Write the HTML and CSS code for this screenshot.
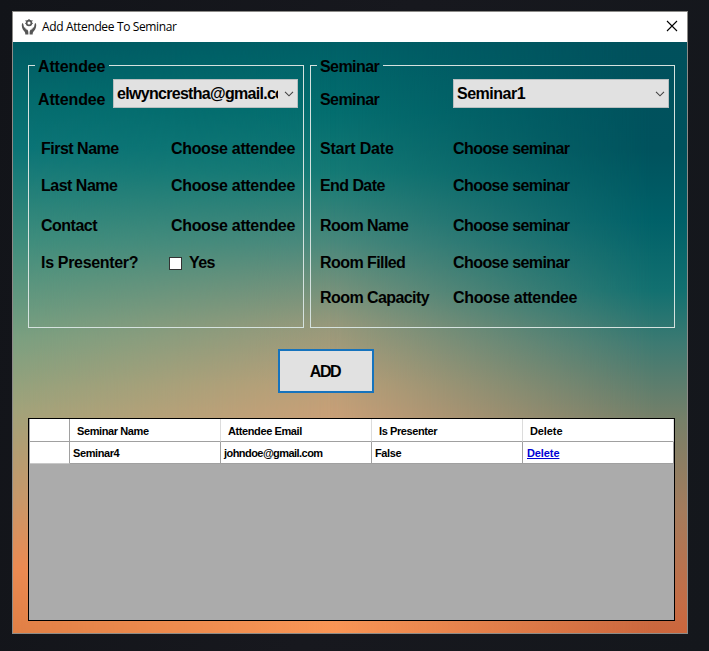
FILE: index.html
```html
<!DOCTYPE html>
<html lang="en">
<head>
<meta charset="utf-8">
<title>Add Attendee To Seminar</title>
<link rel="stylesheet" href="styles.css">
</head>
<body>
<main class="window">
  <header class="titlebar">
    <svg class="app-icon" width="16" height="16" viewBox="0 0 16 16">
      <circle cx="8" cy="4" r="2.4" fill="none" stroke="#555" stroke-width="1.7"/>
      <path d="M8 0v1M4.600 1.300l.8.8M11.400 1.300l-.8.8M4.200 4.500h1M10.800 4.500h1" stroke="#666" stroke-width="1.2"/>
      <path d="M1 4.500c.5-.6 1.200-.2 1.300.6l.6 2.700 3.500 3c.8.8 1 1.800 1 4.700H4.300c0-2-.3-2.600-1.300-3.600C1.300 10.200.3 7.300 1 4.500zM15 4.500c-.5-.6-1.200-.2-1.300.6l-.6 2.700-3.500 3c-.8.8-1 1.800-1 4.700h3.100c0-2 .3-2.600 1.300-3.600 1.700-1.700 2.700-4.600 2-7.400z" fill="#555"/>
      <path d="M3.400 8.200l2.400 2.800M12.600 8.200l-2.400 2.800" stroke="#bbb" stroke-width=".8"/>
    </svg>
    <h1 class="title">Add Attendee To Seminar</h1>
    <svg class="close" width="12" height="12" viewBox="0 0 12 12"><path d="M1 1l10 10M11 1L1 11" stroke="#000" stroke-width="1.1"/></svg>
  </header>
  <div class="client">
    <div class="groups">
      <fieldset class="group group-attendee">
        <legend>Attendee</legend>
        <div class="row row-select"><span class="label">Attendee</span>
          <div class="combo"><span class="combo-text">elwyncrestha@gmail.co</span><svg class="chevron" width="10" height="6" viewBox="0 0 10 6"><path d="M1 .8l4 4 4-4" fill="none" stroke="#444" stroke-width="1.1"/></svg></div>
        </div>
        <div class="row row-first"><span class="label">First Name</span><span class="value">Choose attendee</span></div>
        <div class="row row-second"><span class="label">Last Name</span><span class="value">Choose attendee</span></div>
        <div class="row row-third"><span class="label">Contact</span><span class="value">Choose attendee</span></div>
        <div class="row row-fourth"><span class="label presenter">Is Presenter?</span><label class="check"><i class="box"></i>Yes</label></div>
      </fieldset>
      <fieldset class="group group-seminar">
        <legend>Seminar</legend>
        <div class="row row-select"><span class="label">Seminar</span>
          <div class="combo"><span class="combo-text">Seminar1</span><svg class="chevron" width="10" height="6" viewBox="0 0 10 6"><path d="M1 .8l4 4 4-4" fill="none" stroke="#444" stroke-width="1.1"/></svg></div>
        </div>
        <div class="row row-first"><span class="label date">Start Date</span><span>Choose seminar</span></div>
        <div class="row row-second"><span class="label">End Date</span><span>Choose seminar</span></div>
        <div class="row row-third"><span class="label">Room Name</span><span>Choose seminar</span></div>
        <div class="row row-fourth"><span class="label">Room Filled</span><span>Choose seminar</span></div>
        <div class="row row-fifth"><span class="label">Room Capacity</span><span class="value">Choose attendee</span></div>
      </fieldset>
    </div>
    <button class="add" type="button">ADD</button>
    <div class="grid-view">
      <table class="grid">
        <thead><tr><th class="handle"></th><th>Seminar Name</th><th>Attendee Email</th><th>Is Presenter</th><th>Delete</th></tr></thead>
        <tbody><tr><td class="handle"></td><td>Seminar4</td><td class="email">johndoe@gmail.com</td><td>False</td><td><a href="#">Delete</a></td></tr></tbody>
      </table>
    </div>
  </div>
</main>
</body>
</html>
```
FILE: styles.css
```css
* { box-sizing: border-box; }
body {
  margin: 0;
  height: 651px;
  padding: 11px 21px 17px 12px;
  background: linear-gradient(100deg, #121419, #17181e 50%, #14171c);
  font-family: "Liberation Sans", Arial, sans-serif;
  overflow: hidden;
}
.window {
  display: flex;
  flex-direction: column;
  height: 623px;
  border: 1px solid #8c8b88;
}
.titlebar {
  display: flex;
  align-items: center;
  height: 30px;
  flex: none;
  padding: 0 9px 0 8px;
  background: #fff;
}
.title {
  flex: 1;
  margin: 0 0 0 5px;
  font: 400 12px/16px "Open Sans", "Noto Sans", sans-serif;
  letter-spacing: -0.36px;
  color: #000;
}
.close { margin-top: -2px; }

/* Backdrop: three vertical ramps blended across the width */
.client {
  position: relative;
  isolation: isolate;
  flex: 1;
  padding: 13px 12px 12px 15px;
  background: linear-gradient(#006067 0, #046e6f 12%, #157a75 22%, #4b897c 34%, #98997b 48%, #bda078 58%, #cba078 64%, #ee9860 90%, #fb9655 100%);
}
.client::before,
.client::after {
  content: "";
  position: absolute;
  inset: 0;
  z-index: -1;
}
.client::before {
  background: linear-gradient(#005a62 0, #046b6d 10%, #0b7476 18%, #3c8c7c 33%, #7a9f80 50%, #a0a27a 62%, #c6986a 77%, #ea8a52 89%, #e07f45 100%);
  -webkit-mask-image: linear-gradient(90deg, #000, transparent 48%);
  mask-image: linear-gradient(90deg, #000, transparent 48%);
}
.client::after {
  background: linear-gradient(#00505c 0, #00525d 18%, #006068 30%, #127070 42%, #3d7a72 51%, #778069 64%, #a47c5d 79%, #c56d46 95%, #cc663c 100%);
  -webkit-mask-image: linear-gradient(90deg, transparent 47%, #000 95%);
  mask-image: linear-gradient(90deg, transparent 47%, #000 95%);
}

.groups { display: flex; gap: 6px; height: 273px; }
.group {
  min-width: 0;
  margin: 0;
  padding: 0;
  border: 1px solid #d5e2df;
  font-size: 16px;
  font-weight: 700;
  letter-spacing: -0.57px;
  white-space: nowrap;
}
.group-attendee { width: 276px; }
.group-seminar { width: 365px; }
legend {
  height: 20px;
  margin-left: 6px;
  padding: 2px 4px 0 3px;
  line-height: 20px;
}
.row { display: flex; align-items: center; padding-top: 1px; }
.row-select { height: 49px; }
.row-first { height: 49px; }
.row-second { height: 25px; }
.row-third { height: 55px; }
.row-fourth { height: 19px; }
.row-fifth { height: 51px; }
.value { letter-spacing: -0.33px; }
.group-attendee .label { letter-spacing: -0.5px; }
.group-attendee legend,
.group-attendee .row-select .label { letter-spacing: -0.15px; }
.group .presenter { letter-spacing: -0.32px; }
.group .date { letter-spacing: -0.2px; }
.group-attendee .row { padding-left: 12px; }
.group-attendee .row-select { padding-left: 9px; }
.group-attendee .label { width: 130px; }
.group-attendee .row-select .label { width: 75px; }
.group-seminar .row { padding-left: 9px; }
.group-seminar .label { width: 133px; }
.combo {
  display: flex;
  align-items: center;
  width: 185px;
  height: 29px;
  margin-bottom: 13px;
  padding: 0 3px;
  border: 1px solid #b9bfc0;
  background: #e1e1e1;
}
.group-seminar .combo { width: 216px; }
.combo-text { flex: 1; min-width: 0; margin-right: 6px; overflow: hidden; letter-spacing: -0.5px; }
.group-attendee .combo-text { letter-spacing: -0.7px; }
.chevron { flex: none; }
.check { display: flex; align-items: center; margin-left: -2px; }
.box {
  width: 13px;
  height: 13px;
  margin-right: 7px;
  border: 1px solid #333;
  background: #fff;
}

.add {
  display: block;
  width: 96px;
  height: 44px;
  margin: 21px 0 25px 250px;
  padding: 1px 2px 0 0;
  border: 2px solid #1673bd;
  border-radius: 0;
  background: #e1e1e1;
  color: #000;
  font: 700 16px "Liberation Sans", Arial, sans-serif;
  letter-spacing: -1.4px;
}

.grid-view {
  width: 647px;
  height: 203px;
  padding-left: 1px;
  border: 1px solid #000;
  background: #ababab;
}
.grid {
  width: 644px;
  border-collapse: separate;
  border-spacing: 0;
  table-layout: fixed;
  font-size: 11px;
  font-weight: 700;
  letter-spacing: -0.4px;
}
.grid th, .grid td {
  padding: 0 0 0 3px;
  height: 22px;
  border-right: 1px solid #a0a0a0;
  border-bottom: 1px solid #a0a0a0;
  background: #fff;
  text-align: left;
  white-space: nowrap;
}
.grid th { height: 23px; padding: 2px 0 0 7px; border-right-color: #dcdcdc; }
.grid .handle { width: 40px; border-right-color: #a0a0a0; }
.grid tbody .handle { border-bottom-color: #c8c8c8; }
.grid .email { letter-spacing: -0.55px; }
.grid th:last-child { letter-spacing: -0.1px; }
.grid a { color: #0000d4; margin-left: 1px; letter-spacing: -0.1px; }
```
